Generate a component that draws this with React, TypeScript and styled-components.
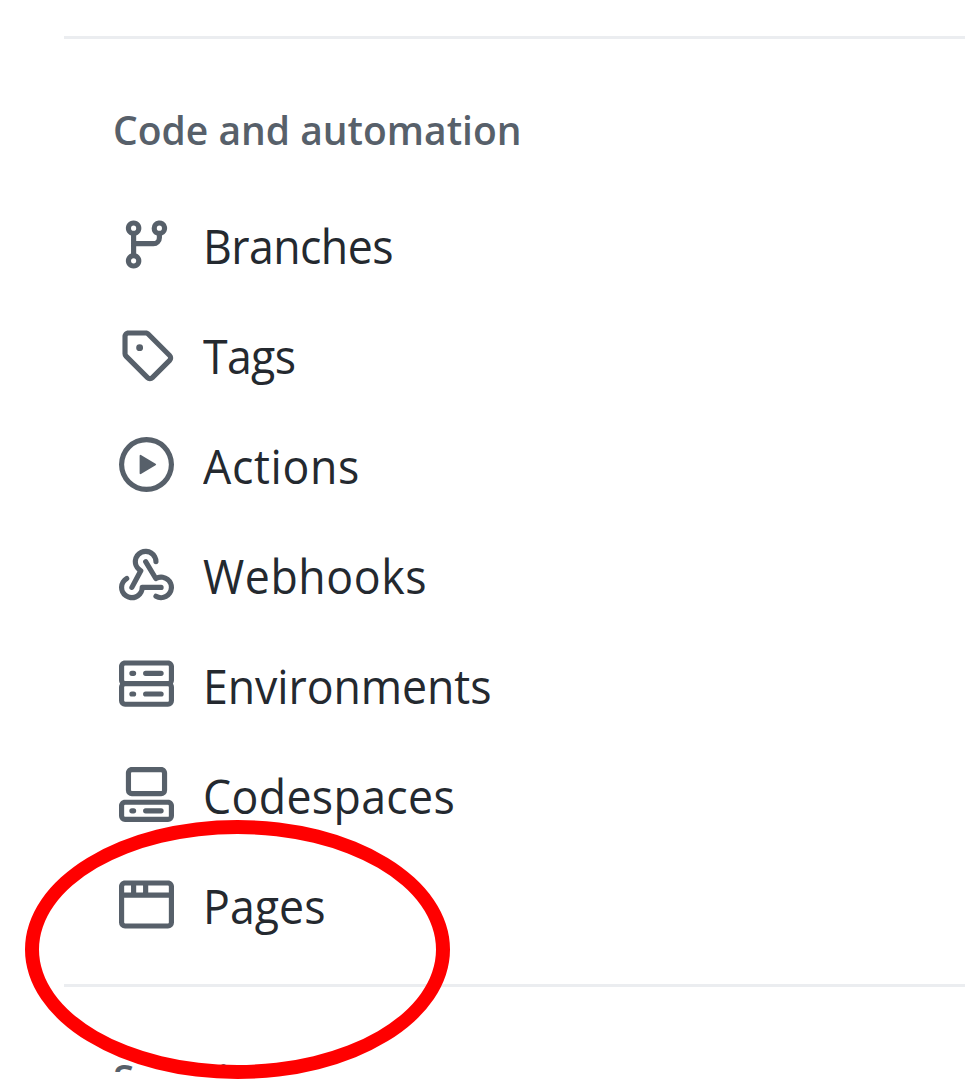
import React from "react";
import styled, { createGlobalStyle } from "styled-components";

const GlobalStyle = createGlobalStyle`
  * { box-sizing: border-box; }
  body { margin: 0; background: #fff; overflow: hidden; }
`;

const Screen = styled.main`
  position: relative;
  width: 965px;
  height: 1079px;
  overflow: hidden;
  background: #fff;
  font-family: "Segoe UI", "Open Sans", "Noto Sans", sans-serif;
`;

const Sidebar = styled.nav`
  height: 1072px;
  overflow: hidden;
  padding: 36px 0 0 64px;
`;

const Section = styled.section<{ $top?: number }>`
  height: 948px;
  border-top: 3px solid #ebedf0;
  padding: ${(p) => p.$top ?? 61}px 0 0 49px;
`;

const Heading = styled.h2`
  margin: 0;
  width: max-content;
  height: 60px;
  line-height: 60px;
  font-size: 40.5px;
  font-weight: 540;
  color: #57606a;
  white-space: nowrap;
  transform: scaleX(0.963);
  transform-origin: left center;
`;

const List = styled.ul`
  list-style: none;
  margin: 29px 0 0;
  padding: 0;
`;

const Item = styled.li`
  display: flex;
  align-items: center;
  gap: 28.5px;
  height: 110px;
  padding-left: 6px;
`;

const Icon = styled.svg`
  flex: none;
  width: 55px;
  height: 55px;
  margin-top: 1px;
  fill: #57606a;
`;

const Label = styled.span<{ $spacing: number }>`
  padding-top: 4px;
  font-size: 47px;
  font-weight: 370;
  line-height: 64px;
  letter-spacing: ${(p) => p.$spacing}px;
  color: #24292f;
  white-space: nowrap;
  transform: scaleX(0.95);
  transform-origin: left center;
`;

const Highlight = styled.div`
  position: absolute;
  left: 25px;
  top: 820px;
  width: 425px;
  height: 259px;
  border: 14px solid #ff0000;
  border-radius: 50%;
`;

const items = [
  {
    label: "Branches",
    spacing: -0.6,
    path: "M9.5 3.25a2.25 2.25 0 1 1 3 2.122V6A2.5 2.5 0 0 1 10 8.5H5v2.128a2.251 2.251 0 1 1-1.5 0V5.372a2.25 2.25 0 1 1 1.5 0V7h5a1 1 0 0 0 1-1v-.628A2.25 2.25 0 0 1 9.5 3.25Zm-6 0a.75.75 0 1 0 1.5 0 .75.75 0 0 0-1.5 0Zm8.25-.75a.75.75 0 1 0 0 1.5.75.75 0 0 0 0-1.5ZM4.25 12a.75.75 0 1 0 0 1.5.75.75 0 0 0 0-1.5Z",
  },
  {
    label: "Tags",
    spacing: -0.7,
    path: "M1 7.775V2.75C1 1.784 1.784 1 2.75 1h5.025c.464 0 .91.184 1.238.513l6.25 6.25a1.75 1.75 0 0 1 0 2.474l-5.026 5.026a1.75 1.75 0 0 1-2.474 0l-6.25-6.25A1.752 1.752 0 0 1 1 7.775Zm1.5 0c0 .066.026.13.073.177l6.25 6.25a.25.25 0 0 0 .354 0l5.025-5.025a.25.25 0 0 0 0-.354l-6.25-6.25a.25.25 0 0 0-.177-.073H2.75a.25.25 0 0 0-.25.25ZM6 5a1 1 0 1 1 0 2 1 1 0 0 1 0-2Z",
  },
  {
    label: "Actions",
    spacing: 0.7,
    path: "M8 0a8 8 0 1 1 0 16A8 8 0 0 1 8 0ZM1.5 8a6.5 6.5 0 1 0 13 0 6.5 6.5 0 0 0-13 0Zm4.879-2.773 4.264 2.559a.25.25 0 0 1 0 .428l-4.264 2.559A.25.25 0 0 1 6 10.559V5.442a.25.25 0 0 1 .379-.215Z",
  },
  {
    label: "Webhooks",
    spacing: 0.6,
    path: "M5.5 4.25a2.25 2.25 0 0 1 4.5 0 .75.75 0 0 0 1.5 0 3.75 3.75 0 1 0-6.14 2.889l-2.272 4.258a.75.75 0 0 0 1.324.706L7 7.25a.75.75 0 0 0-.309-1.015A2.25 2.25 0 0 1 5.5 4.25ZM7.364 3.607a.75.75 0 0 1 1.03.257l2.608 4.349a3.75 3.75 0 1 1-.628 6.785.75.75 0 0 1 .752-1.299 2.25 2.25 0 1 0-.033-3.88.75.75 0 0 1-1.03-.256L7.107 4.636a.75.75 0 0 1 .257-1.03ZM2.9 8.776A.75.75 0 0 1 2.625 9.8 2.25 2.25 0 1 0 6 11.75a.75.75 0 0 1 .75-.751h5.5a.75.75 0 0 1 0 1.5H7.425a3.75 3.75 0 1 1-5.55-3.998.75.75 0 0 1 1.024.274Z",
  },
  {
    label: "Environments",
    spacing: -0.08,
    path: "M1.75 1h12.5c.966 0 1.75.784 1.75 1.75v4c0 .372-.116.717-.314 1 .198.283.314.628.314 1v4a1.75 1.75 0 0 1-1.75 1.75H1.75A1.75 1.75 0 0 1 0 12.75v-4c0-.358.109-.707.314-1a1.739 1.739 0 0 1-.314-1v-4C0 1.784.784 1 1.75 1ZM1.5 2.75v4c0 .138.112.25.25.25h12.5a.25.25 0 0 0 .25-.25v-4a.25.25 0 0 0-.25-.25H1.75a.25.25 0 0 0-.25.25Zm.25 5.75a.25.25 0 0 0-.25.25v4c0 .138.112.25.25.25h12.5a.25.25 0 0 0 .25-.25v-4a.25.25 0 0 0-.25-.25ZM7 4.75A.75.75 0 0 1 7.75 4h4.5a.75.75 0 0 1 0 1.5h-4.5A.75.75 0 0 1 7 4.75ZM7.75 10h4.5a.75.75 0 0 1 0 1.5h-4.5a.75.75 0 0 1 0-1.5ZM3 4.75A.75.75 0 0 1 3.75 4h.5a.75.75 0 0 1 0 1.5h-.5A.75.75 0 0 1 3 4.75ZM3.75 10h.5a.75.75 0 0 1 0 1.5h-.5a.75.75 0 0 1 0-1.5Z",
  },
  {
    label: "Codespaces",
    spacing: 0.38,
    path: "M0 11.25c0-.966.784-1.75 1.75-1.75h12.5c.966 0 1.75.784 1.75 1.75v3A1.75 1.75 0 0 1 14.25 16H1.75A1.75 1.75 0 0 1 0 14.25Zm2-9.5C2 .784 2.784 0 3.75 0h8.5C13.216 0 14 .784 14 1.75v5a1.75 1.75 0 0 1-1.75 1.75h-8.5A1.75 1.75 0 0 1 2 6.75Zm1.75-.25a.25.25 0 0 0-.25.25v5c0 .138.112.25.25.25h8.5a.25.25 0 0 0 .25-.25v-5a.25.25 0 0 0-.25-.25Zm-2 9.5a.25.25 0 0 0-.25.25v3c0 .138.112.25.25.25h12.5a.25.25 0 0 0 .25-.25v-3a.25.25 0 0 0-.25-.25ZM7 12.75a.75.75 0 0 1 .75-.75h4.5a.75.75 0 0 1 0 1.5h-4.5a.75.75 0 0 1-.75-.75Zm-4 0a.75.75 0 0 1 .75-.75h.5a.75.75 0 0 1 0 1.5h-.5a.75.75 0 0 1-.75-.75Z",
  },
  {
    label: "Pages",
    spacing: 0.05,
    path: "M0 2.75C0 1.784.784 1 1.75 1h12.5c.966 0 1.75.784 1.75 1.75v10.5A1.75 1.75 0 0 1 14.25 15H1.75A1.75 1.75 0 0 1 0 13.25ZM14.5 6h-13v7.25c0 .138.112.25.25.25h12.5a.25.25 0 0 0 .25-.25Zm-6-3.5v2h6V2.75a.25.25 0 0 0-.25-.25ZM5 2.5v2h2v-2Zm-3.25 0a.25.25 0 0 0-.25.25V4.5h2v-2Z",
  },
];

export default function App() {
  return (
    <Screen>
      <GlobalStyle />
      <Sidebar>
        <Section>
          <Heading>Code and automation</Heading>
          <List>
            {items.map((item) => (
              <Item key={item.label}>
                <Icon viewBox="0 0 16 16" aria-hidden="true">
                  <path fillRule="evenodd" d={item.path} />
                </Icon>
                <Label $spacing={item.spacing}>{item.label}</Label>
              </Item>
            ))}
          </List>
        </Section>
        <Section $top={62}>
          <Heading>Security</Heading>
        </Section>
      </Sidebar>
      <Highlight />
    </Screen>
  );
}
